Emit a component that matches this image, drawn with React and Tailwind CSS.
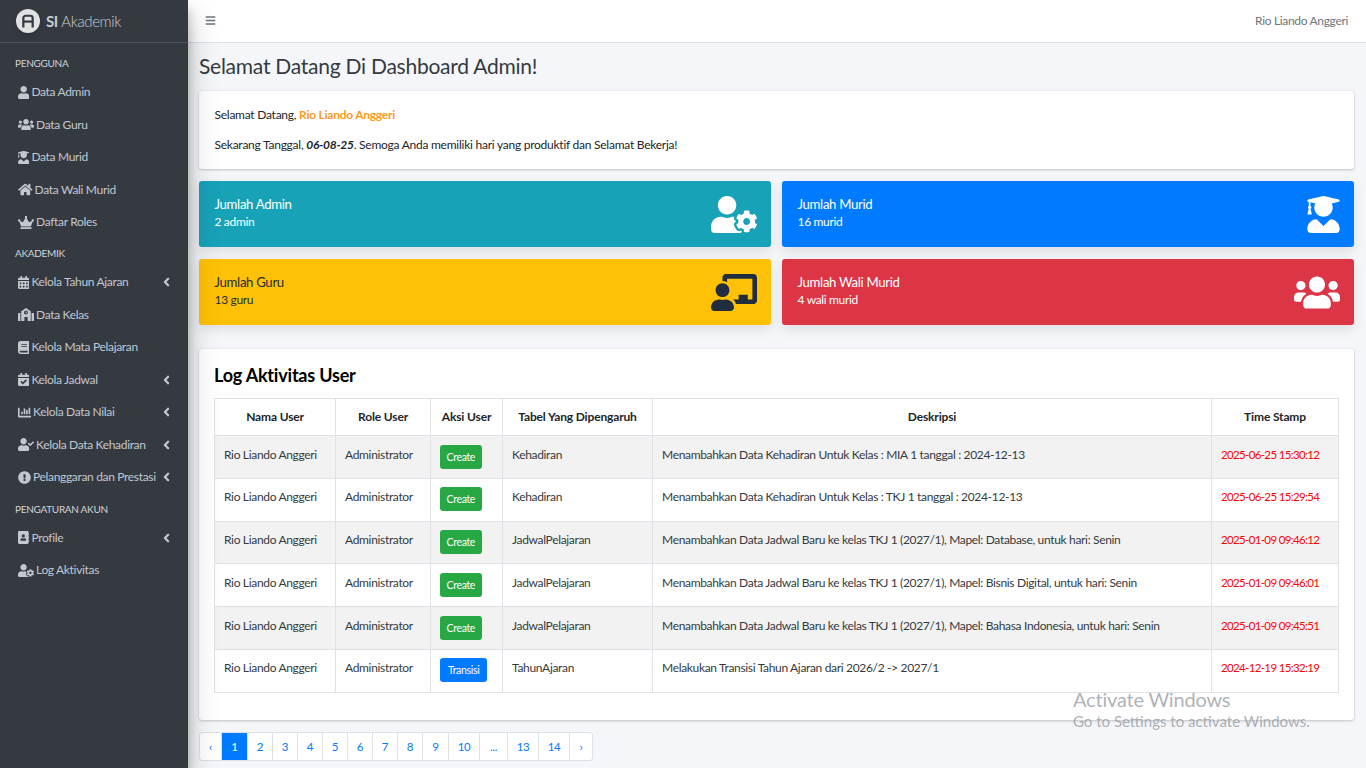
import React from 'react';
import {
  FaUser, FaUsers, FaUserGraduate, FaHome, FaCrown, FaCalendarAlt, FaSchool, FaBook,
  FaCalendarCheck, FaChartBar, FaUserCheck, FaExclamationCircle, FaAddressBook, FaUserCog,
  FaChalkboardTeacher, FaAngleLeft, FaBars,
} from 'react-icons/fa';

const menu = [
  { header: 'PENGGUNA' },
  { label: 'Data Admin', icon: FaUser, w: 'w-[11.4px]' },
  { label: 'Data Guru', icon: FaUsers, w: 'w-[16px]' },
  { label: 'Data Murid', icon: FaUserGraduate, w: 'w-[11.4px]' },
  { label: 'Data Wali Murid', icon: FaHome, w: 'w-[14.6px]' },
  { label: 'Daftar Roles', icon: FaCrown, w: 'w-[16px]' },
  { header: 'AKADEMIK' },
  { label: 'Kelola Tahun Ajaran', icon: FaCalendarAlt, w: 'w-[11.4px]', arrow: true },
  { label: 'Data Kelas', icon: FaSchool, w: 'w-[16px]' },
  { label: 'Kelola Mata Pelajaran', icon: FaBook, w: 'w-[11.4px]' },
  { label: 'Kelola Jadwal', icon: FaCalendarCheck, w: 'w-[11.4px]', arrow: true },
  { label: 'Kelola Data Nilai', icon: FaChartBar, w: 'w-[13px]', arrow: true },
  { label: 'Kelola Data Kehadiran', icon: FaUserCheck, w: 'w-[16px]', arrow: true },
  { label: 'Pelanggaran dan Prestasi', icon: FaExclamationCircle, w: 'w-[13px]', arrow: true },
  { header: 'PENGATURAN AKUN' },
  { label: 'Profile', icon: FaAddressBook, w: 'w-[11.4px]', arrow: true },
  { label: 'Log Aktivitas', icon: FaUserCog, w: 'w-[16px]' },
];

const logs = [
  ['Create', 'Kehadiran', 'Menambahkan Data Kehadiran Untuk Kelas : MIA 1 tanggal : 2024-12-13', '2025-06-25 15:30:12'],
  ['Create', 'Kehadiran', 'Menambahkan Data Kehadiran Untuk Kelas : TKJ 1 tanggal : 2024-12-13', '2025-06-25 15:29:54'],
  ['Create', 'JadwalPelajaran', 'Menambahkan Data Jadwal Baru ke kelas TKJ 1 (2027/1), Mapel: Database, untuk hari: Senin', '2025-01-09 09:46:12'],
  ['Create', 'JadwalPelajaran', 'Menambahkan Data Jadwal Baru ke kelas TKJ 1 (2027/1), Mapel: Bisnis Digital, untuk hari: Senin', '2025-01-09 09:46:01'],
  ['Create', 'JadwalPelajaran', 'Menambahkan Data Jadwal Baru ke kelas TKJ 1 (2027/1), Mapel: Bahasa Indonesia, untuk hari: Senin', '2025-01-09 09:45:51'],
  ['Transisi', 'TahunAjaran', 'Melakukan Transisi Tahun Ajaran dari 2026/2 -> 2027/1', '2024-12-19 15:32:19'],
];

const pages = [
  ['‹', 'w-[22px] text-[#6c757d]'], ['1', 'w-[26px] bg-[#007bff] text-white'], ['2', 'w-[25px]'], ['3', 'w-[25px]'],
  ['4', 'w-[25px]'], ['5', 'w-[25px]'], ['6', 'w-[25px]'], ['7', 'w-[25px]'], ['8', 'w-[25px]'], ['9', 'w-[26px]'],
  ['10', 'w-[31px]'], ['...', 'w-[28px] text-[#6c757d]'], ['13', 'w-[31px]'], ['14', 'w-[31px]'], ['›', 'w-[22px]'],
];

const cards = [
  { title: 'Jumlah Admin', sub: '2 admin', icon: FaUserCog, w: 'w-[46px] h-[37px]', cls: 'bg-[#17a2b8] text-white' },
  { title: 'Jumlah Murid', sub: '16 murid', icon: FaUserGraduate, w: 'w-[33px] h-[37px]', cls: 'bg-[#007bff] text-white' },
  { title: 'Jumlah Guru', sub: '13 guru', icon: FaChalkboardTeacher, w: 'w-[46px] h-[37px]', cls: 'bg-[#ffc107] text-[#1f2d3d]' },
  { title: 'Jumlah Wali Murid', sub: '4 wali murid', icon: FaUsers, w: 'w-[46px] h-[37px]', cls: 'bg-[#dc3545] text-white' },
];

const th = 'border border-[#dee2e6] font-bold text-center text-[#212529] px-1 tracking-[-0.15px]';
const td = 'border border-[#dee2e6] align-top pt-[9.5px] pl-[9px] text-[#343a40] leading-[18px] whitespace-nowrap';

export default function App() {
  return (
    <div className="flex h-screen overflow-hidden bg-[#f4f6f9] text-[12px] tracking-[-0.33px] text-[#212529] font-['Lato','Noto_Sans',sans-serif]">
      {/* Sidebar */}
      <aside className="w-[188px] shrink-0 bg-[#343a40] text-[#c2c7d0] shadow-[0_14px_28px_rgba(0,0,0,0.25),0_10px_10px_rgba(0,0,0,0.22)] z-10">
        <div className="h-[43px] flex items-center pl-[16px] gap-[6px] border-b border-[#4b545c]">
          <div className="w-[24px] h-[24px] rounded-full bg-[#dfe1e3] flex items-center justify-center shadow-md">
            <svg viewBox="0 0 24 24" className="w-[14px] h-[14px]" fill="none" stroke="#343a40" strokeWidth="3.8">
              <path d="M4 23V7a4 4 0 0 1 4-4h8a4 4 0 0 1 4 4v16" />
              <path d="M4 13h16" />
            </svg>
          </div>
          <span className="text-[15px] text-[#c8ccd2] tracking-[-0.4px]"><b className="font-bold">SI</b> <span className="font-light">Akademik</span></span>
        </div>
        <nav className="pt-[5px]">
          {menu.map((m) =>
            m.header ? (
              <div key={m.header} className="h-[27.8px] pt-[8px] pl-[15px] text-[10px] leading-[14px] tracking-[-0.3px] text-[#d0d4db]">
                {m.header}
              </div>
            ) : (
              <div key={m.label} className="h-[32.5px] flex items-center pl-[18px] pr-[18px] gap-[2px] whitespace-nowrap">
                <m.icon className={`h-[13px] shrink-0 ${m.w}`} />
                <span className="flex-1">{m.label}</span>
                {m.arrow && <FaAngleLeft className="w-[7px] h-[14px] shrink-0" />}
              </div>
            )
          )}
        </nav>
      </aside>

      {/* Main */}
      <div className="flex-1 min-w-0 relative">
        <header className="h-[43px] bg-white border-b border-[#dee2e6] flex items-center justify-between pl-[17px] pr-[18px]">
          <FaBars className="text-[11px] mb-[2px] text-[#6c757d]" />
          <span className="text-[#6c757d]">Rio Liando Anggeri</span>
        </header>

        <main className="pl-[11px] pr-[12px]">
          <h1 className="h-[46px] mb-[2px] flex items-center text-[21px] tracking-[-0.25px] font-normal text-[#343a40]">Selamat Datang Di Dashboard Admin!</h1>

          <section className="h-[78px] bg-white rounded-[3px] shadow-[0_0_1px_rgba(0,0,0,0.125),0_1px_3px_rgba(0,0,0,0.2)] px-[15.5px] pt-[15px] leading-[18px] tracking-[-0.25px]">
            <p>Selamat Datang, <b className="text-[#fd9a1c] font-bold">Rio Liando Anggeri</b></p>
            <p className="mt-[12px]">Sekarang Tanggal, <b className="italic font-bold">06-08-25</b>. Semoga Anda memiliki hari yang produktif dan Selamat Bekerja!</p>
          </section>

          <div className="grid grid-cols-2 gap-x-[11px] gap-y-[12px] mt-[12px]">
            {cards.map((c) => (
              <div key={c.title} className={`h-[66px] rounded-[3px] shadow-[0_4px_12px_rgba(0,0,0,0.1)] flex items-center justify-between pl-[15.5px] pr-[14px] ${c.cls}`}>
                <div className="pb-[4px]">
                  <div className="text-[13.2px] leading-[20px]">{c.title}</div>
                  <div className="leading-[18px] mt-[-1px]">{c.sub}</div>
                </div>
                <c.icon className={c.w} />
              </div>
            ))}
          </div>

          <section className="mt-[24px] h-[371px] bg-white rounded-[3px] shadow-[0_0_1px_rgba(0,0,0,0.125),0_1px_3px_rgba(0,0,0,0.2)] px-[15px] pt-[9px]">
            <h2 className="h-[34px] mb-[6px] text-[18px] tracking-[-0.2px] font-bold text-black flex items-center">Log Aktivitas User</h2>
            <table className="w-full table-fixed border-collapse">
              <colgroup>
                <col className="w-[121px]" />
                <col className="w-[95px]" />
                <col className="w-[72px]" />
                <col className="w-[150px]" />
                <col className="w-[559px]" />
                <col className="w-[127px]" />
              </colgroup>
              <thead>
                <tr className="h-[37px]">
                  <th className={th}>Nama User</th>
                  <th className={th}>Role User</th>
                  <th className={th}>Aksi User</th>
                  <th className={th}>Tabel Yang Dipengaruh</th>
                  <th className={th}>Deskripsi</th>
                  <th className={th}>Time Stamp</th>
                </tr>
              </thead>
              <tbody>
                {logs.map((r, i) => (
                  <tr key={i} className={`h-[42.8px] ${i % 2 === 0 ? 'bg-[#f2f2f2]' : 'bg-white'}`}>
                    <td className={td}>Rio Liando Anggeri</td>
                    <td className={td}>Administrator</td>
                    <td className={td}>
                      <span className={`block w-fit h-[24px] leading-[24px] mt-[-1px] rounded-[3px] text-white text-[10.5px] ${r[0] === 'Create' ? 'px-[6.5px] bg-[#28a745]' : 'px-[8px] bg-[#007bff]'}`}>{r[0]}</span>
                    </td>
                    <td className={td}>{r[1]}</td>
                    <td className={td}>{r[2]}</td>
                    <td className={`${td} text-[#ff0000] text-[11.5px] tracking-[-0.65px]`}>{r[3]}</td>
                  </tr>
                ))}
              </tbody>
            </table>
          </section>

          <div className="mt-[12px] flex h-[29px] w-fit rounded-[3px] overflow-hidden border border-[#dee2e6] bg-white">
            {pages.map(([p, cls]) => (
              <span key={p} className={`h-full flex items-center justify-center border-r border-[#dee2e6] last:border-r-0 text-[#007bff] text-[11.5px] ${cls}`}>{p}</span>
            ))}
          </div>
        </main>

        {/* Windows activation watermark */}
        <div className="absolute left-[885px] top-[687px] text-[#8a8f96]/70 pointer-events-none tracking-normal">
          <div className="text-[20px] leading-[24px] tracking-[-0.2px]">Activate Windows</div>
          <div className="text-[15px] leading-[21px]">Go to Settings to activate Windows.</div>
        </div>
      </div>
    </div>
  );
}
